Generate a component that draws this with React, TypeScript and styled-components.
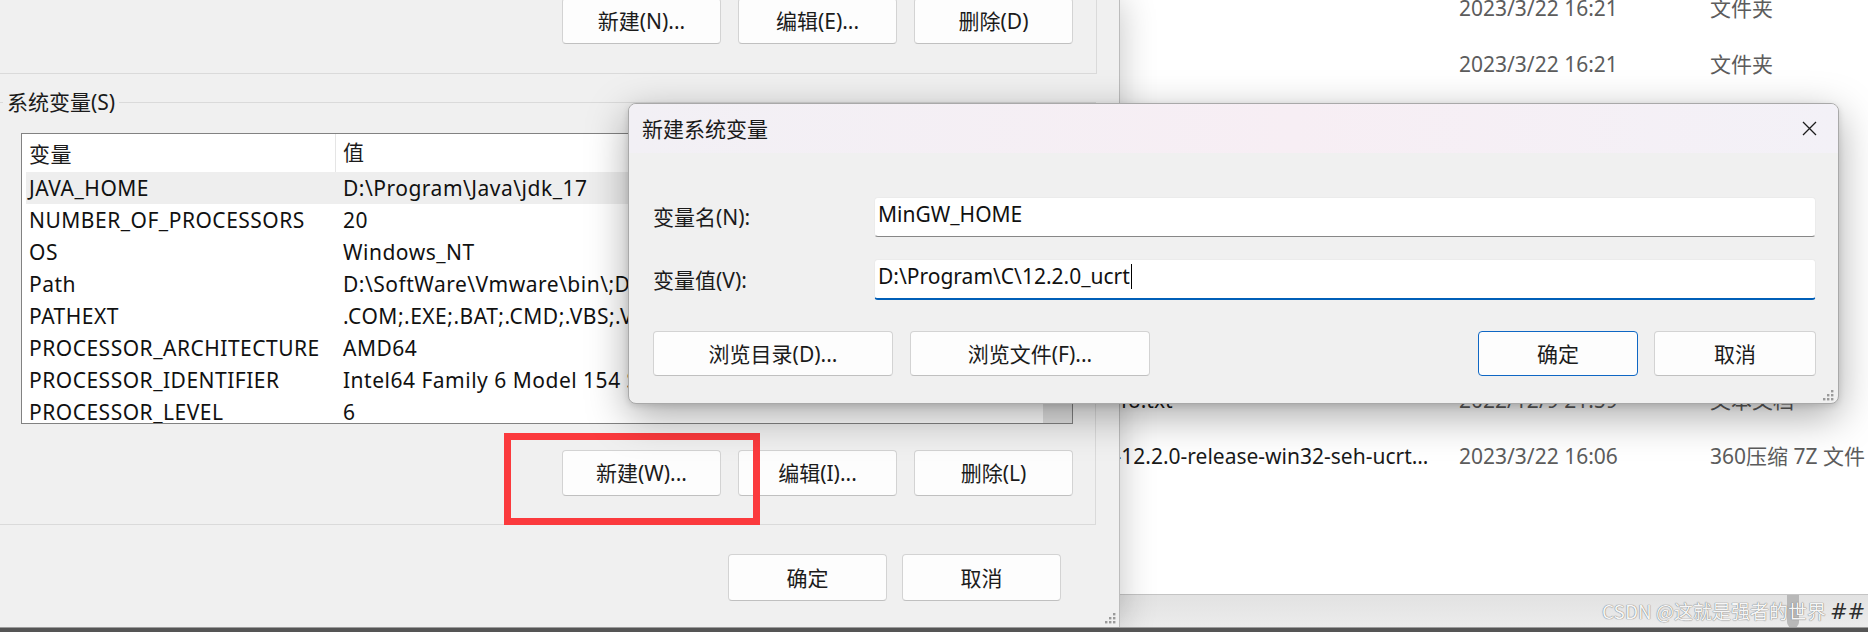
import React from "react"
import styled, { createGlobalStyle } from "styled-components"

const GlobalStyle = createGlobalStyle`
	html, body {
		margin: 0;
		padding: 0;
		background: #ffffff;
	}
	body {
		font-family: "Noto Sans", "Noto Sans CJK SC", sans-serif;
		font-size: 21px;
		color: #1b1b1b;
	}
	* {
		box-sizing: border-box;
	}
`

const Desktop = styled.div`
	position: relative;
	width: 1868px;
	height: 632px;
	overflow: hidden;
	background: #ffffff;
`

/* ---------- explorer behind ---------- */

const Explorer = styled.section`
	position: absolute;
	left: 1000px;
	top: 0;
	right: 0;
	height: 628px;
	background: #ffffff;
	display: flex;
	flex-direction: column;
	z-index: 1;
`

const FileList = styled.div`
	flex: 1;
	margin-top: -20px;
	overflow: hidden;
`

const FileRow = styled.div`
	height: 56px;
	display: grid;
	grid-template-columns: 413px 251px 1fr;
	align-items: center;
	padding-left: 46px;
	line-height: 28px;
	white-space: nowrap;
`

const FileName = styled.span`
	display: block;
	overflow: hidden;
	text-overflow: ellipsis;
	padding-right: 30px;
	color: #1a1a1a;
`

const FileMeta = styled.span`
	display: block;
	overflow: hidden;
	color: #5c5c5c;
`

const StatusBar = styled.div`
	height: 34px;
	border-top: 1px solid #c4c4c4;
	background: linear-gradient(#e2e2e2, #ececec);
	display: flex;
`

const StatusThumb = styled.div`
	margin-left: 787px;
	width: 12px;
	height: 100%;
	border-radius: 0 0 6px 6px;
	background: #b8b8b8;
`

/* ---------- environment variables window ---------- */

const EnvWindow = styled.section`
	position: absolute;
	left: 0;
	top: 0;
	width: 1120px;
	height: 627px;
	background: #f0f0f0;
	border-right: 1px solid #bcbcbc;
	box-shadow: 0 0 34px rgba(0, 0, 0, 0.24);
	display: flex;
	flex-direction: column;
	z-index: 2;
`

const UserGroup = styled.div`
	margin: -20px 0 0 -10px;
	width: 1107px;
	height: 94px;
	border: 1px solid #dadada;
	border-top: none;
	border-left: none;
	display: flex;
	justify-content: flex-end;
	align-items: flex-end;
	gap: 17px;
	padding: 0 23px 29px 0;
`

const SystemGroup = styled.div`
	position: relative;
	margin: 28px 0 0 -10px;
	width: 1106px;
	height: 423px;
	border: 1px solid #dadada;
	border-left: none;
	padding: 30px 22px 0 31px;
	display: flex;
	flex-direction: column;
`

const Legend = styled.span`
	position: absolute;
	left: 13px;
	top: -15px;
	padding: 0 4px;
	background: #f0f0f0;
	line-height: 28px;
	white-space: nowrap;
`

const ListView = styled.div`
	height: 291px;
	border: 1px solid #828282;
	background: #ffffff;
	display: flex;
	overflow: hidden;
	letter-spacing: 0.5px;
`

const ListBody = styled.div`
	flex: 1;
	min-width: 0;
`

const ListHeader = styled.div`
	height: 38px;
	padding-top: 2px;
	display: grid;
	grid-template-columns: 313px 1fr;
	line-height: 36px;
`

const HeaderCell = styled.div<{ $divider?: boolean }>`
	padding-left: 7px;
	border-left: ${p => (p.$divider ? "1px solid #e5e5e5" : "none")};
	margin-top: ${p => (p.$divider ? "-2px" : "0")};
	white-space: nowrap;
`

const ListRow = styled.div<{ $selected?: boolean }>`
	height: 32px;
	margin-left: 4px;
	display: grid;
	grid-template-columns: 314px 1fr;
	background: ${p => (p.$selected ? "#eeeeee" : "transparent")};
	line-height: 32px;
	white-space: nowrap;
	color: #111111;
`

const Cell = styled.div`
	padding-left: 3px;
	overflow: hidden;
`

const ScrollTrack = styled.div`
	width: 29px;
	background: #e2e2e2;
`

const ButtonRow = styled.div<{ $top: number; $gap: number }>`
	margin-top: ${p => p.$top}px;
	display: flex;
	justify-content: flex-end;
	gap: ${p => p.$gap}px;
`

const Footer = styled.div`
	margin-top: 29px;
	padding-right: 58px;
	display: flex;
	justify-content: flex-end;
	gap: 15px;
`

const Button = styled.button<{ $w: number; $h?: number; $primary?: boolean }>`
	flex: none;
	width: ${p => p.$w}px;
	height: ${p => p.$h ?? 46}px;
	padding: 0;
	background: #fdfdfd;
	border: 1px solid ${p => (p.$primary ? "#0f67c4" : "#d3d3d3")};
	border-bottom-color: ${p => (p.$primary ? "#0f67c4" : "#c0c0c0")};
	border-radius: 4px;
	font-family: inherit;
	font-size: 21px;
	line-height: 28px;
	color: #1b1b1b;
	white-space: nowrap;
`

const GripSpot = styled.div<{ $right: number; $bottom: number }>`
	position: absolute;
	right: ${p => p.$right}px;
	bottom: ${p => p.$bottom}px;
	width: 11px;
	height: 11px;
	display: flex;
`

/* ---------- new variable dialog ---------- */

const Dialog = styled.section`
	position: absolute;
	left: 628px;
	top: 103px;
	width: 1211px;
	height: 301px;
	border: 1px solid #a9a9a9;
	border-radius: 8px;
	background: #f0f0f0;
	box-shadow: 0 12px 40px rgba(0, 0, 0, 0.34), 0 2px 6px rgba(0, 0, 0, 0.12);
	overflow: hidden;
	display: flex;
	flex-direction: column;
	z-index: 4;
`

const TitleBar = styled.div`
	height: 49px;
	flex: none;
	display: flex;
	align-items: center;
	justify-content: space-between;
	padding-left: 13px;
	background: linear-gradient(90deg, #f2f0f5 0%, #f7eef4 55%, #f3f1f7 100%);
`

const Title = styled.span`
	line-height: 28px;
	color: #1a1a1a;
`

const CloseButton = styled.div`
	width: 58px;
	height: 100%;
	display: flex;
	align-items: center;
	justify-content: center;
`

const DialogBody = styled.div`
	padding: 44px 22px 0 24px;
	display: flex;
	flex-direction: column;
`

const FieldRow = styled.div<{ $top?: number }>`
	margin-top: ${p => p.$top ?? 0}px;
	display: grid;
	grid-template-columns: 221px 1fr;
	align-items: center;
`

const FieldLabel = styled.label`
	line-height: 28px;
	white-space: nowrap;
`

const TextBox = styled.div<{ $focused?: boolean }>`
	height: ${p => (p.$focused ? 41 : 40)}px;
	background: #ffffff;
	border: 1px solid #ebebeb;
	border-bottom: ${p => (p.$focused ? "2px solid #005fb8" : "1px solid #878787")};
	border-radius: 4px;
	display: flex;
	align-items: center;
	padding: 0 0 6px 3px;
	line-height: 28px;
	color: #111111;
	white-space: nowrap;
`

const Caret = styled.span`
	width: 1px;
	height: 25px;
	margin-left: 1px;
	background: #000000;
`

const DialogButtons = styled.div`
	margin-top: 31px;
	display: flex;
	justify-content: space-between;
`

const ButtonGroup = styled.div<{ $gap: number }>`
	display: flex;
	gap: ${p => p.$gap}px;
`

/* ---------- overlays on the screenshot ---------- */

const Highlight = styled.div`
	position: absolute;
	left: 504px;
	top: 433px;
	width: 256px;
	height: 92px;
	border: 7px solid #fb3a3d;
	z-index: 3;
`

const Watermark = styled.div`
	position: absolute;
	left: 1602px;
	top: 598px;
	font-family: "Noto Sans CJK SC", sans-serif;
	font-size: 19px;
	line-height: 26px;
	color: #f6f6f6;
	text-shadow: 0 0 1px #6e6e6e, 0 0 1px #8c8c8c;
	white-space: nowrap;
	z-index: 5;
`

const Hashes = styled.span`
	margin-left: 4px;
	font-family: "DejaVu Sans", sans-serif;
	font-style: italic;
	font-size: 21px;
	color: #2e2e2e;
	text-shadow: none;
`

const Strip = styled.div`
	position: absolute;
	left: 0;
	right: 0;
	top: 627px;
	height: 5px;
	border-top: 1px solid #9c9c9c;
	background: #555555;
	z-index: 6;
`

const Grip = () => (
	<svg width="11" height="11" viewBox="0 0 11 11">
		{[
			[8, 0],
			[8, 4],
			[4, 4],
			[8, 8],
			[4, 8],
			[0, 8],
		].map(([x, y]) => (
			<rect key={`${x}-${y}`} x={x} y={y} width="2.4" height="2.4" fill="#9a9a9a" />
		))}
	</svg>
)

const CloseIcon = () => (
	<svg width="15" height="15" viewBox="0 0 15 15">
		<path d="M1 1 L14 14 M14 1 L1 14" stroke="#1c1c1c" strokeWidth="1.3" fill="none" />
	</svg>
)

// rows 2..6 sit under the dialog, so they carry no text
const files = [
	{ name: "bin", date: "2023/3/22 16:21", type: "文件夹" },
	{ name: "lib", date: "2023/3/22 16:21", type: "文件夹" },
	{ name: "", date: "", type: "" },
	{ name: "", date: "", type: "" },
	{ name: "", date: "", type: "" },
	{ name: "", date: "", type: "" },
	{ name: "", date: "", type: "" },
	{ name: "build-info.txt", date: "2022/12/9 21:59", type: "文本文档" },
	{
		name: "x86_64-12.2.0-release-win32-seh-ucrt-rt_v10-rev2.7z",
		date: "2023/3/22 16:06",
		type: "360压缩 7Z 文件",
	},
]

const systemVars = [
	["JAVA_HOME", "D:\\Program\\Java\\jdk_17"],
	["NUMBER_OF_PROCESSORS", "20"],
	["OS", "Windows_NT"],
	["Path", "D:\\SoftWare\\Vmware\\bin\\;D:\\Program\\Java\\jdk_17\\bin;C:\\Windows\\system32"],
	["PATHEXT", ".COM;.EXE;.BAT;.CMD;.VBS;.VBE;.JS;.JSE;.WSF;.WSH;.MSC"],
	["PROCESSOR_ARCHITECTURE", "AMD64"],
	["PROCESSOR_IDENTIFIER", "Intel64 Family 6 Model 154 Stepping 3, GenuineIntel"],
	["PROCESSOR_LEVEL", "6"],
]

export default function App() {
	return (
		<>
			<GlobalStyle />
			<Desktop>
				<Explorer>
					<FileList>
						{files.map((f, i) => (
							<FileRow key={i}>
								<FileName>{f.name}</FileName>
								<FileMeta>{f.date}</FileMeta>
								<FileMeta>{f.type}</FileMeta>
							</FileRow>
						))}
					</FileList>
					<StatusBar>
						<StatusThumb />
					</StatusBar>
				</Explorer>

				<EnvWindow>
					<UserGroup>
						<Button $w={159}>新建(N)...</Button>
						<Button $w={159}>编辑(E)...</Button>
						<Button $w={159}>删除(D)</Button>
					</UserGroup>
					<SystemGroup>
						<Legend>系统变量(S)</Legend>
						<ListView>
							<ListBody>
								<ListHeader>
									<HeaderCell>变量</HeaderCell>
									<HeaderCell $divider>值</HeaderCell>
								</ListHeader>
								{systemVars.map(([name, value], i) => (
									<ListRow key={name} $selected={i === 0}>
										<Cell>{name}</Cell>
										<Cell>{value}</Cell>
									</ListRow>
								))}
							</ListBody>
							<ScrollTrack />
						</ListView>
						<ButtonRow $top={26} $gap={17}>
							<Button $w={159}>新建(W)...</Button>
							<Button $w={159}>编辑(I)...</Button>
							<Button $w={159}>删除(L)</Button>
						</ButtonRow>
					</SystemGroup>
					<Footer>
						<Button $w={159} $h={47}>确定</Button>
						<Button $w={159} $h={47}>取消</Button>
					</Footer>
					<GripSpot $right={3} $bottom={3}>
						<Grip />
					</GripSpot>
				</EnvWindow>

				<Highlight />

				<Dialog>
					<TitleBar>
						<Title>新建系统变量</Title>
						<CloseButton>
							<CloseIcon />
						</CloseButton>
					</TitleBar>
					<DialogBody>
						<FieldRow>
							<FieldLabel>变量名(N):</FieldLabel>
							<TextBox>MinGW_HOME</TextBox>
						</FieldRow>
						<FieldRow $top={22}>
							<FieldLabel>变量值(V):</FieldLabel>
							<TextBox $focused>
								D:\Program\C\12.2.0_ucrt
								<Caret />
							</TextBox>
						</FieldRow>
						<DialogButtons>
							<ButtonGroup $gap={17}>
								<Button $w={240} $h={45}>浏览目录(D)...</Button>
								<Button $w={240} $h={45}>浏览文件(F)...</Button>
							</ButtonGroup>
							<ButtonGroup $gap={16}>
								<Button $w={160} $h={45} $primary>确定</Button>
								<Button $w={162} $h={45}>取消</Button>
							</ButtonGroup>
						</DialogButtons>
					</DialogBody>
					<GripSpot $right={4} $bottom={2}>
						<Grip />
					</GripSpot>
				</Dialog>

				<Watermark>
					CSDN @这就是强者的世界<Hashes>##</Hashes>
				</Watermark>
				<Strip />
			</Desktop>
		</>
	)
}
